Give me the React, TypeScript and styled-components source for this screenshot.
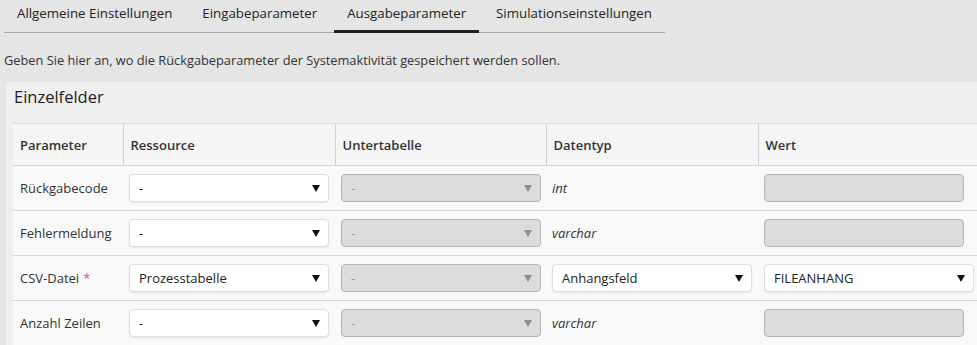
import React from 'react';
import styled, { createGlobalStyle } from 'styled-components';

const GlobalStyle = createGlobalStyle`
  html, body {
    margin: 0;
    padding: 0;
    background: #e5e5e5;
    overflow: hidden;
  }
  body {
    font-family: 'Open Sans', 'Noto Sans', sans-serif;
    font-size: 13px;
    color: #333;
  }
`;

const Page = styled.div`
  padding: 0 0 0 4px;
  width: 1120px;
`;

const TabBar = styled.div`
  display: inline-flex;
  gap: 4px;
  border-bottom: 1px solid #a9a9a9;
`;

const Tab = styled.div<{ $active?: boolean }>`
  padding: 4px 13px 8px;
  line-height: 18px;
  font-size: 13.3px;
  color: #222;
  margin-bottom: -1px;
  border-bottom: 3px solid ${p => (p.$active ? '#222' : 'transparent')};
  cursor: pointer;
  white-space: nowrap;
`;

const Intro = styled.p`
  margin: 19px 0 13px;
  font-size: 12.8px;
  line-height: 17px;
  color: #333;
`;

const Panel = styled.section`
  margin-left: 2px;
  background: #efefef;
  border-radius: 4px 0 0 0;
  padding: 4px 0 0 7px;
`;

const PanelTitle = styled.h3`
  margin: 0 0 15px 1px;
  font-size: 16.5px;
  line-height: 22px;
  font-weight: 400;
  color: #222;
`;

const Table = styled.table`
  border-collapse: collapse;
  table-layout: fixed;
  width: 1100px;
  background: #f9f9f9;
`;

const Th = styled.th<{ $w?: number }>`
  box-sizing: border-box;
  width: ${p => (p.$w ? `${p.$w}px` : 'auto')};
  height: 42px;
  padding: 0 7px;
  text-align: left;
  font-weight: 600;
  font-size: 13px;
  color: #333;
  background: #f5f5f5;
  border-top: 1px solid #dcdcdc;
  border-bottom: 1px solid #d6d6d6;
  border-left: 1px solid #d0d0d0;
  &:first-child {
    border-left: none;
  }
`;

const Tr = styled.tr`
  border-bottom: 1px solid #d9d9d9;
`;

const Td = styled.td`
  height: 44px;
  padding: 0 5px 0 6px;
  vertical-align: middle;
  font-size: 13px;
  color: #333;
  &:first-child {
    padding-left: 7px;
  }
`;

const Required = styled.span`
  color: #e0504f;
  margin-left: 4px;
`;

const SelectBox = styled.div<{ $disabled?: boolean; $w?: number }>`
  box-sizing: border-box;
  width: ${p => p.$w ?? 200}px;
  height: 28px;
  display: flex;
  align-items: center;
  justify-content: space-between;
  padding: 0 8px 0 9px;
  border-radius: 4px;
  border: 1px solid ${p => (p.$disabled ? '#b4b4b4' : '#dedede')};
  background: ${p => (p.$disabled ? '#dcdcdc' : '#fff')};
  color: ${p => (p.$disabled ? '#999' : '#222')};
  box-shadow: ${p => (p.$disabled ? 'none' : '0 1px 2px rgba(0,0,0,0.08)')};
  font-size: 13px;
  cursor: ${p => (p.$disabled ? 'default' : 'pointer')};
`;

const Caret = styled.svg<{ $disabled?: boolean }>`
  width: 8px;
  height: 7px;
  fill: ${p => (p.$disabled ? '#8e8e8e' : '#111')};
  flex-shrink: 0;
`;

const DisabledInput = styled.div`
  box-sizing: border-box;
  width: 200px;
  height: 28px;
  border-radius: 4px;
  border: 1px solid #b4b4b4;
  background: #dcdcdc;
`;

const TypeText = styled.span`
  font-style: italic;
  color: #333;
`;

const Select: React.FC<{ value: string; disabled?: boolean; w?: number }> = ({ value, disabled, w }) => (
  <SelectBox $disabled={disabled} $w={w}>
    <span>{value}</span>
    <Caret $disabled={disabled} viewBox="0 0 8 7">
      <path d="M0 0h8L4 7z" />
    </Caret>
  </SelectBox>
);

const tabs = ['Allgemeine Einstellungen', 'Eingabeparameter', 'Ausgabeparameter', 'Simulationseinstellungen'];

interface Row {
  name: string;
  required?: boolean;
  resource: string;
  type?: string;
  typeSelect?: string;
  value?: string;
}

const rows: Row[] = [
  { name: 'Rückgabecode', resource: '-', type: 'int' },
  { name: 'Fehlermeldung', resource: '-', type: 'varchar' },
  { name: 'CSV-Datei', required: true, resource: 'Prozesstabelle', typeSelect: 'Anhangsfeld', value: 'FILEANHANG' },
  { name: 'Anzahl Zeilen', resource: '-', type: 'varchar' },
];

export default function App() {
  return (
    <>
      <GlobalStyle />
      <Page>
        <TabBar>
          {tabs.map(t => (
            <Tab key={t} $active={t === 'Ausgabeparameter'}>
              {t}
            </Tab>
          ))}
        </TabBar>
        <Intro>Geben Sie hier an, wo die Rückgabeparameter der Systemaktivität gespeichert werden sollen.</Intro>
        <Panel>
          <PanelTitle>Einzelfelder</PanelTitle>
          <Table>
            <thead>
              <tr>
                <Th $w={110}>Parameter</Th>
                <Th $w={212}>Ressource</Th>
                <Th $w={211}>Untertabelle</Th>
                <Th $w={212}>Datentyp</Th>
                <Th>Wert</Th>
              </tr>
            </thead>
            <tbody>
              {rows.map(r => (
                <Tr key={r.name}>
                  <Td>
                    {r.name}
                    {r.required && <Required>*</Required>}
                  </Td>
                  <Td>
                    <Select value={r.resource} />
                  </Td>
                  <Td>
                    <Select value="-" disabled />
                  </Td>
                  <Td>{r.typeSelect ? <Select value={r.typeSelect} /> : <TypeText>{r.type}</TypeText>}</Td>
                  <Td>{r.value ? <Select value={r.value} w={210} /> : <DisabledInput />}</Td>
                </Tr>
              ))}
            </tbody>
          </Table>
        </Panel>
      </Page>
    </>
  );
}
